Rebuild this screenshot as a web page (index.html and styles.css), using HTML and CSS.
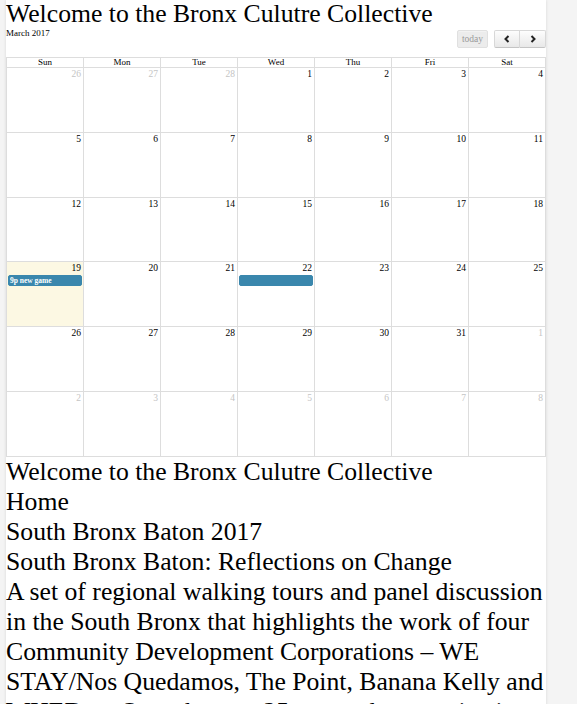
FILE: index.html
```html
<!DOCTYPE html>
<html>
<head>
<meta charset="utf-8">
<title>Bronx Culutre Collective</title>
<link rel="stylesheet" href="styles.css">
</head>
<body>
<div class="page">
  <h1 class="title">Welcome to the Bronx Culutre Collective</h1>
  <div class="toolbar">
    <h2 class="month">March 2017</h2>
    <div class="buttons">
      <button class="btn today">today</button>
      <div class="group">
        <button class="btn nav"><svg width="8" height="8" viewBox="0 0 8 8"><polyline points="5.5,1 2.5,4 5.5,7" fill="none" stroke="#222" stroke-width="2"/></svg></button>
        <button class="btn nav"><svg width="8" height="8" viewBox="0 0 8 8"><polyline points="2.5,1 5.5,4 2.5,7" fill="none" stroke="#222" stroke-width="2"/></svg></button>
      </div>
    </div>
  </div>
  <div class="cal">
    <div class="head">
      <div>Sun</div><div>Mon</div><div>Tue</div><div>Wed</div><div>Thu</div><div>Fri</div><div>Sat</div>
    </div>
    <div class="week">
      <div class="day other"><span class="num">26</span></div>
      <div class="day other"><span class="num">27</span></div>
      <div class="day other"><span class="num">28</span></div>
      <div class="day"><span class="num">1</span></div>
      <div class="day"><span class="num">2</span></div>
      <div class="day"><span class="num">3</span></div>
      <div class="day"><span class="num">4</span></div>
    </div>
    <div class="week">
      <div class="day"><span class="num">5</span></div>
      <div class="day"><span class="num">6</span></div>
      <div class="day"><span class="num">7</span></div>
      <div class="day"><span class="num">8</span></div>
      <div class="day"><span class="num">9</span></div>
      <div class="day"><span class="num">10</span></div>
      <div class="day"><span class="num">11</span></div>
    </div>
    <div class="week">
      <div class="day"><span class="num">12</span></div>
      <div class="day"><span class="num">13</span></div>
      <div class="day"><span class="num">14</span></div>
      <div class="day"><span class="num">15</span></div>
      <div class="day"><span class="num">16</span></div>
      <div class="day"><span class="num">17</span></div>
      <div class="day"><span class="num">18</span></div>
    </div>
    <div class="week">
      <div class="day today-cell"><span class="num">19</span><div class="event">9p new game</div></div>
      <div class="day"><span class="num">20</span></div>
      <div class="day"><span class="num">21</span></div>
      <div class="day"><span class="num">22</span><div class="event"></div></div>
      <div class="day"><span class="num">23</span></div>
      <div class="day"><span class="num">24</span></div>
      <div class="day"><span class="num">25</span></div>
    </div>
    <div class="week">
      <div class="day"><span class="num">26</span></div>
      <div class="day"><span class="num">27</span></div>
      <div class="day"><span class="num">28</span></div>
      <div class="day"><span class="num">29</span></div>
      <div class="day"><span class="num">30</span></div>
      <div class="day"><span class="num">31</span></div>
      <div class="day other"><span class="num">1</span></div>
    </div>
    <div class="week">
      <div class="day other"><span class="num">2</span></div>
      <div class="day other"><span class="num">3</span></div>
      <div class="day other"><span class="num">4</span></div>
      <div class="day other"><span class="num">5</span></div>
      <div class="day other"><span class="num">6</span></div>
      <div class="day other"><span class="num">7</span></div>
      <div class="day other"><span class="num">8</span></div>
    </div>
  </div>
  <div class="content">
    <div>Welcome to the Bronx Culutre Collective</div>
    <div>Home</div>
    <div>South Bronx Baton 2017</div>
    <div>South Bronx Baton: Reflections on Change</div>
    <p class="para">A set of regional walking tours and panel discussion in the South Bronx that highlights the work of four Community Development Corporations – WE STAY/Nos Quedamos, The Point, Banana Kelly and WHEDco. Over the past 25 years, the organizations have shaped the neighborhood.</p>
  </div>
</div>
</body>
</html>
```
FILE: styles.css
```css
html {
  background: #f4f4f4;
  margin: 0;
  padding: 0;
}
body {
  margin: 0;
  padding: 0;
  font-family: "Liberation Serif", "Times New Roman", serif;
  color: #000;
  overflow: hidden;
}
.page {
  margin-left: 6px;
  width: 540px;
  background: #fff;
  min-height: 704px;
  box-shadow: 0 0 3px rgba(0, 0, 0, 0.12);
}
.title {
  margin: 0;
  font-size: 25.7px;
  font-weight: normal;
  line-height: 28px;
}
.toolbar {
  display: flex;
  justify-content: space-between;
  align-items: flex-start;
  height: 29px;
}
.month {
  margin: 0;
  font-size: 9px;
  font-weight: normal;
  line-height: 11px;
}
.buttons {
  display: flex;
  align-items: flex-start;
  gap: 6px;
  margin-top: 2px;
}
.group {
  display: flex;
}
.btn {
  height: 18px;
  border: 1px solid #d8d8d8;
  border-bottom-color: #c4c4c4;
  background: linear-gradient(#fdfdfd, #e8e8e8);
  padding: 0;
  margin: 0;
  font-family: "Liberation Serif", "Times New Roman", serif;
  font-size: 9.5px;
  display: flex;
  align-items: center;
  justify-content: center;
  box-shadow: inset 0 1px 0 rgba(255, 255, 255, 0.3);
}
.today {
  width: 31px;
  color: #9a9a9a;
  background: #ececec;
  border-color: #e0e0e0;
  border-radius: 2px;
}
.nav {
  width: 26px;
}
.nav:first-child {
  border-radius: 2px 0 0 2px;
}
.nav:last-child {
  border-radius: 0 2px 2px 0;
  border-left: none;
}
.cal {
  border-left: 1px solid #ddd;
}
.head {
  display: grid;
  grid-template-columns: repeat(7, 1fr);
  border-top: 1px solid #ddd;
}
.head div {
  font-size: 9px;
  line-height: 9px;
  text-align: center;
  border-right: 1px solid #ddd;
  border-bottom: 1px solid #ddd;
}
.week {
  display: grid;
  grid-template-columns: repeat(7, 1fr);
  height: 64.8px;
}
.day {
  border-right: 1px solid #ddd;
  border-bottom: 1px solid #ddd;
  display: flex;
  flex-direction: column;
  align-items: stretch;
  min-width: 0;
}
.num {
  font-size: 9.5px;
  line-height: 10px;
  text-align: right;
  padding: 1px 2px 0 0;
}
.other .num {
  color: #c4c4c4;
}
.today-cell {
  background: #fcf8e3;
}
.event {
  margin: 2px 1px 0 1px;
  height: 11px;
  background: #3a87ad;
  border: 1px solid #3a87ad;
  border-radius: 2px;
  box-sizing: border-box;
  color: #fff;
  font-size: 7.5px;
  font-weight: bold;
  line-height: 9px;
  padding-left: 1px;
  white-space: nowrap;
  overflow: hidden;
}
.content {
  font-size: 25.7px;
  line-height: 30px;
  width: 546px;
}
.para {
  margin: 0;
}
```
